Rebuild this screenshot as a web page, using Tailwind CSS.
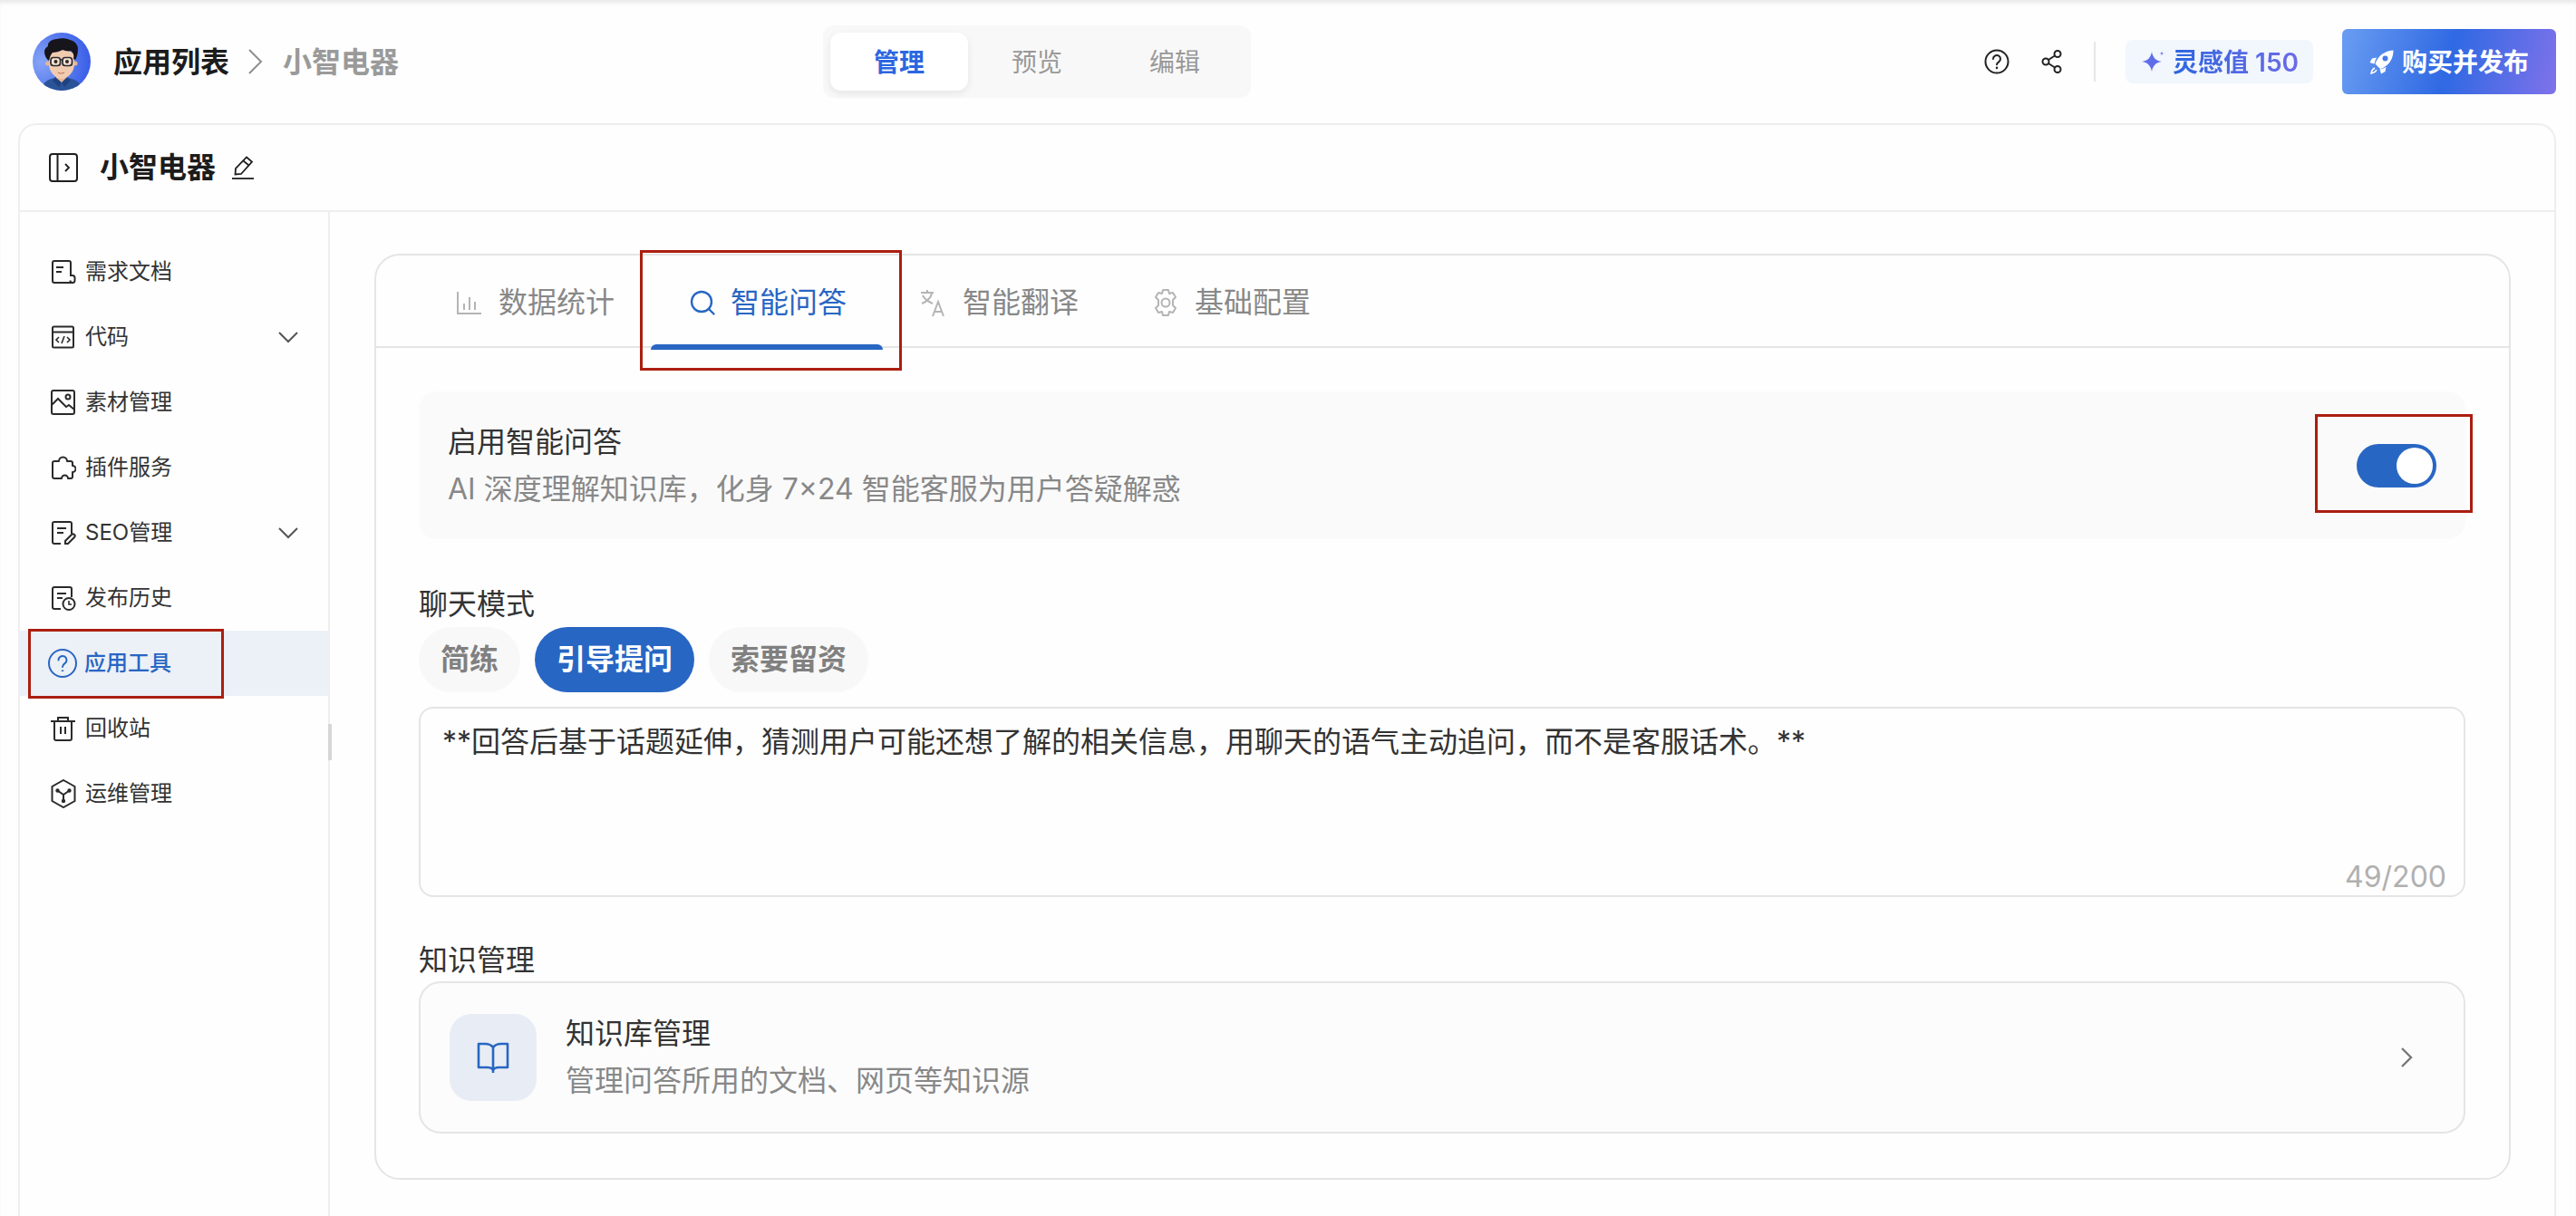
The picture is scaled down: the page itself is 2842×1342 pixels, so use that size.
<!DOCTYPE html>
<html lang="zh-CN">

<head>
    <meta charset="UTF-8">
    <meta name="viewport" content="width=device-width, initial-scale=1.0">
    <title>小智电器</title>
    <script src="https://cdn.jsdelivr.net/npm/@tailwindcss/browser@4"></script>
</head>

<body class="relative w-[2842px] h-[1342px] overflow-hidden bg-[#fefefe] text-[#333333] font-['Inter','Noto_Sans_CJK_SC',sans-serif] shadow-[inset_0_5px_5px_-2px_rgba(0,0,0,0.09)]">

    <!-- Top bar -->
    <header class="flex items-center h-[136px]">
        <div class="flex items-center w-[908px] pl-9">
            <svg class="w-16 h-16 shrink-0" viewBox="0 0 64 64">
                <defs>
                    <radialGradient id="avatarBg" cx="0.15" cy="0.5" r="0.95">
                        <stop offset="0" stop-color="#86a4f6" />
                        <stop offset="1" stop-color="#2f55e6" />
                    </radialGradient>
                    <clipPath id="avatarClip">
                        <circle cx="32" cy="32" r="32" />
                    </clipPath>
                </defs>
                <g clip-path="url(#avatarClip)">
                    <rect width="64" height="64" fill="url(#avatarBg)" />
                    <path d="M10 64c0-9 7-14 22-15 15 1 22 6 22 15z" fill="#2a5398" />
                    <path d="M26 44h11v7l-5 5-6-5z" fill="#e7b497" />
                    <path d="M25 49l7 6-3 5-7-7zM38 49l-6 6 3 5 7-7z" fill="#1e4380" />
                    <circle cx="16.500" cy="34" r="2.500" fill="#e7b497" />
                    <circle cx="47" cy="34" r="2.500" fill="#e7b497" />
                    <path d="M18 26c0-4 6-7 14-7s14 3 14 7v9c0 8-7 16-14 16S18 43 18 35z" fill="#f1cbb0" />
                    <path d="M18 31c-3-2-5-6-5-10 0-3 2-5 4-6-1-4 4-8 10-8 4-1 10-1 14 1 5 1 9 5 9 10 0 4-1 9-3 12l-2-1c1-4 0-7-3-9-3 1-6 0-9-1-3 2-8 3-11 3-2 2-3 5-4 9z" fill="#17151c" />
                    <rect x="20" y="27.500" width="10.500" height="9" rx="3" fill="#f4e2d5" stroke="#2a2a2e" stroke-width="1.700" />
                    <rect x="33" y="27.500" width="10.500" height="9" rx="3" fill="#f4e2d5" stroke="#2a2a2e" stroke-width="1.700" />
                    <path d="M30.500 30h2.500" stroke="#2a2a2e" stroke-width="1.500" />
                    <circle cx="25.500" cy="32" r="2" fill="#33261f" />
                    <circle cx="38" cy="32" r="2" fill="#33261f" />
                    <path d="M28 44c2 1.200 5 1.200 7 0" stroke="#b9705c" stroke-width="1.100" fill="none" />
                </g>
            </svg>
            <span class="ml-[25px] pt-[2px] text-[32px] leading-[44px] font-semibold text-[#1c1c1c]">应用列表</span>
            <svg class="ml-[21px] w-4 h-7 shrink-0" viewBox="0 0 16 28" fill="none" stroke="#8f8f8f" stroke-width="2">
                <path d="M1 1l13 13L1 27" />
            </svg>
            <span class="ml-[22px] pt-[2px] text-[32px] leading-[44px] font-semibold text-[#9a9a9a]">小智电器</span>
        </div>

        <div class="flex w-[472px] h-20 p-2 rounded-xl bg-[#f8f8f8]">
            <div class="flex-1 flex items-center justify-center pt-[2px] rounded-xl bg-white text-[28px] font-semibold text-[#2b66e0] shadow-[0_3px_8px_rgba(0,0,0,0.08)]">管理</div>
            <div class="flex-1 flex items-center justify-center pt-[2px] text-[28px] text-[#999999]">预览</div>
            <div class="flex-1 flex items-center justify-center pt-[2px] text-[28px] text-[#999999]">编辑</div>
        </div>

        <div class="flex-1 flex items-center justify-end pr-[22px]">
            <svg class="w-7 h-7 shrink-0" viewBox="0 0 28 28" fill="none" stroke="#222222" stroke-width="2" stroke-linecap="round">
                <circle cx="14" cy="14" r="12.500" />
                <path d="M10 11a4 4 0 1 1 6.200 3.300c-1.400.9-2.200 1.500-2.200 3" />
                <path d="M14 20.600v.4" stroke-width="2.400" />
            </svg>
            <svg class="ml-[35px] w-6 h-7 shrink-0" viewBox="0 0 24 28" fill="none" stroke="#222222" stroke-width="2">
                <circle cx="18" cy="5.500" r="3.500" />
                <circle cx="5" cy="14" r="3.500" />
                <circle cx="18" cy="22.500" r="3.500" />
                <path d="M8 12l7-4.500M8 16l7 4.500" />
            </svg>
            <div class="ml-[34px] w-[2px] h-11 bg-[#e6e6e6]"></div>
            <div class="ml-[33px] flex items-center w-[207px] h-12 pl-[17px] rounded-lg bg-[#f2f6fd]">
                <svg class="w-[26px] h-7 shrink-0" viewBox="0 0 26 28">
                    <path d="M12 3c1 6 4 10 11 11-7 1-10 5-11 11-1-6-4-10-11-11 7-1 10-5 11-11z" fill="#5f6ee8" />
                    <path d="M23 2.500c.2 1.500.8 2.200 2.500 2.500-1.700.3-2.300 1-2.500 2.500-.2-1.500-.8-2.200-2.500-2.500 1.700-.3 2.300-1 2.500-2.500z" fill="#7d7ff0" />
                </svg>
                <span class="ml-[9px] pt-[2px] text-[28px] leading-[44px] font-semibold whitespace-nowrap bg-linear-to-r from-[#2b66e0] to-[#6a6be6] bg-clip-text text-transparent">灵感值 150</span>
            </div>
            <button class="ml-8 flex items-center w-[236px] h-[72px] pl-[30px] rounded-md bg-linear-[105deg,#6a9df2_0%,#2f69e3_50%,#8072ea_100%] text-white text-[28px] font-semibold">
                <svg class="w-7 h-7 shrink-0" viewBox="0 0 28 28">
                    <path d="M26.500 1.500c-7 .5-13 3.500-17 9-1.500 2-2.500 4-3 6l5.500 5.500c2-.5 4-1.500 6-3 5.500-4 8.500-10 8.500-17.500z" fill="#ffffff" />
                    <path d="M8 9.500l-5 1L.5 15l5 1.500c.5-2.500 1.500-5 2.500-7z" fill="#ffffff" />
                    <path d="M18.500 20l-1 5-4.500 2.500-1.500-5c2.500-.5 5-1.500 7-2.500z" fill="#ffffff" />
                    <circle cx="17.500" cy="10.500" r="3" fill="#4a7be6" />
                    <path d="M6 21c-2 1-3.500 3-4 6 3-.5 5-2 6-4" fill="none" stroke="#ffffff" stroke-width="1.500" />
                </svg>
                <span class="ml-[8px] pt-[2px] whitespace-nowrap">购买并发布</span>
            </button>
        </div>
    </header>

    <!-- App panel -->
    <div class="ml-5 w-[2800px] h-[1206px] rounded-t-[20px] border-2 border-b-0 border-[#eeeeee]">
        <div class="flex items-center h-[96px] pl-8 border-b-2 border-[#eeeeee]">
            <svg class="w-8 h-8 shrink-0" viewBox="0 0 32 32" fill="none" stroke="#1f1f1f" stroke-width="2">
                <rect x="1" y="1" width="30" height="30" rx="3" />
                <path d="M9.500 1v30" />
                <path d="M18 12l4 4-4 4" stroke-width="1.800" />
            </svg>
            <span class="ml-[24px] text-[32px] leading-[44px] font-semibold text-[#1c1c1c]">小智电器</span>
            <svg class="ml-[18px] w-6 h-[26px] shrink-0" viewBox="0 0 24 26" fill="none" stroke="#1f1f1f" stroke-width="1.800">
                <path d="M16 1.500l6 5L10 20l-6.500.5L4 14z" />
                <path d="M12.500 5.500l6 5" />
                <path d="M0 25h24" />
            </svg>
        </div>

        <div class="flex">
            <!-- Sidebar -->
            <nav class="relative w-[342px] h-[1108px] pt-[30px] border-r-2 border-[#eeeeee] text-2xl text-[#333333]">
                <a class="flex items-center h-[72px] pl-[34px] gap-[10px]">
                    <svg class="w-7 h-7 shrink-0" viewBox="0 0 28 28" fill="none" stroke="#2a2a2a" stroke-width="2">
                        <path d="M22 19V4a2 2 0 0 0-2-2H4a2 2 0 0 0-2 2v20a2 2 0 0 0 2 2h21" />
                        <path d="M22 18h2a2.500 2.500 0 0 1 2.500 2.500v3a2.500 2.500 0 0 1-5 0" />
                        <path d="M6 9h8M6 14h6" />
                    </svg>
                    <span>需求文档</span>
                </a>
                <a class="flex items-center h-[72px] pl-[34px] gap-[10px]">
                    <svg class="w-7 h-7 shrink-0" viewBox="0 0 28 28" fill="none" stroke="#2a2a2a" stroke-width="2">
                        <rect x="2" y="2.500" width="23" height="23" rx="1.500" />
                        <path d="M2 8.500h23" />
                        <path d="M9 14l-3 3 3 3M18 14l3 3-3 3M15 13l-3 8" stroke-width="1.600" />
                    </svg>
                    <span>代码</span>
                    <svg class="ml-auto mr-8 w-6 h-6 shrink-0" viewBox="0 0 24 24" fill="none" stroke="#555555" stroke-width="2">
                        <path d="M2 7l10 10L22 7" />
                    </svg>
                </a>
                <a class="flex items-center h-[72px] pl-[34px] gap-[10px]">
                    <svg class="w-7 h-7 shrink-0" viewBox="0 0 28 28" fill="none" stroke="#2a2a2a" stroke-width="2">
                        <rect x="1" y="1" width="25" height="26" rx="2" />
                        <circle cx="19" cy="8" r="2.500" />
                        <path d="M1 17l7-7 9 9 3-2 6 5" />
                    </svg>
                    <span>素材管理</span>
                </a>
                <a class="flex items-center h-[72px] pl-[34px] gap-[10px]">
                    <svg class="w-7 h-7 shrink-0" viewBox="0 0 28 28" fill="none" stroke="#2a2a2a" stroke-width="2" stroke-linejoin="round">
                        <path d="M7 26H4a2 2 0 0 1-2-2V9a2 2 0 0 1 2-2h5a4.500 4.500 0 0 1 9 0h4a2 2 0 0 1 2 2v3a3.500 3.500 0 0 1 0 7v5a2 2 0 0 1-2 2h-3a3.500 3.500 0 0 0-7 0z" />
                    </svg>
                    <span>插件服务</span>
                </a>
                <a class="flex items-center h-[72px] pl-[34px] gap-[10px]">
                    <svg class="w-7 h-7 shrink-0" viewBox="0 0 28 28" fill="none" stroke="#2a2a2a" stroke-width="2">
                        <path d="M11 26H4a2 2 0 0 1-2-2V4a2 2 0 0 1 2-2h17a2 2 0 0 1 2 2v11" />
                        <path d="M7 9h10M7 14h7" />
                        <path d="M16 26v-3l7-7a2 2 0 0 1 3 3l-7 7z" />
                    </svg>
                    <span>SEO管理</span>
                    <svg class="ml-auto mr-8 w-6 h-6 shrink-0" viewBox="0 0 24 24" fill="none" stroke="#555555" stroke-width="2">
                        <path d="M2 7l10 10L22 7" />
                    </svg>
                </a>
                <a class="flex items-center h-[72px] pl-[34px] gap-[10px]">
                    <svg class="w-7 h-7 shrink-0" viewBox="0 0 28 28" fill="none" stroke="#2a2a2a" stroke-width="2">
                        <path d="M11 26H4a2 2 0 0 1-2-2V4a2 2 0 0 1 2-2h17a2 2 0 0 1 2 2v9" />
                        <path d="M7 9h10M7 14h6" />
                        <circle cx="20" cy="20.500" r="6.500" />
                        <path d="M20 17v4h3" stroke-width="1.600" />
                    </svg>
                    <span>发布历史</span>
                </a>
                <a class="flex items-center h-[72px] pl-[31px] gap-2 bg-[#ecf0f7] font-medium text-[#2866c3]">
                    <svg class="w-8 h-8 shrink-0" viewBox="0 0 32 32" fill="none" stroke="#2866c3" stroke-width="2">
                        <circle cx="16" cy="16" r="15" />
                        <path d="M11.500 12.500a4.500 4.500 0 1 1 7 3.700c-1.500 1-2.500 1.800-2.500 3.800" stroke-linecap="round" />
                        <path d="M16 23.500v1.500" stroke-width="2.400" />
                    </svg>
                    <span>应用工具</span>
                </a>
                <a class="flex items-center h-[72px] pl-[34px] gap-[10px]">
                    <svg class="w-7 h-7 shrink-0" viewBox="0 0 28 28" fill="none" stroke="#2a2a2a" stroke-width="2">
                        <path d="M0 6h27" />
                        <path d="M8 6V2h11v4" />
                        <path d="M4 6v19a2 2 0 0 0 2 2h15a2 2 0 0 0 2-2V6" />
                        <path d="M11 12v8M16 12v8" />
                    </svg>
                    <span>回收站</span>
                </a>
                <a class="flex items-center h-[72px] pl-[34px] gap-[10px]">
                    <svg class="w-7 h-8 shrink-0" viewBox="0 0 28 32" fill="none" stroke="#2a2a2a" stroke-width="2">
                        <path d="M14 1l12.500 7v16L14 31 1.500 24V8z" />
                        <path d="M7.500 12.500L14 17l6.500-4.500M14 17v7" />
                        <circle cx="7.500" cy="12.500" r="1.200" fill="#2a2a2a" />
                        <circle cx="20.500" cy="12.500" r="1.200" fill="#2a2a2a" />
                        <circle cx="14" cy="24" r="1.200" fill="#2a2a2a" />
                    </svg>
                    <span>运维管理</span>
                </a>
                <div class="absolute right-[-4px] top-[565px] w-1 h-10 bg-[#d6d6d6]"></div>
            </nav>

            <!-- Content -->
            <main class="flex-1 pl-[49px] pr-12 pt-[46px]">
                <div class="h-[1022px] rounded-[28px] border-2 border-[#e5e5e5]">
                    <div class="flex h-[102px] pl-[47px] border-b-2 border-[#e5e5e5] text-[32px] text-[#888888]">
                        <div class="relative flex items-center w-64 pl-[42px] gap-[18px] pt-[3px]">
                            <svg class="w-7 h-7 shrink-0" viewBox="0 0 28 28" fill="none" stroke="#b4b4b4" stroke-width="2">
                                <path d="M1 2v24h26" />
                                <path d="M8 15v7M14 8v14M20 13v9" />
                            </svg>
                            <span>数据统计</span>
                        </div>
                        <div class="relative flex items-center w-64 pl-[43px] gap-[17px] pt-[3px] text-[#2866c3]">
                            <svg class="w-7 h-7 shrink-0" viewBox="0 0 28 28" fill="none" stroke="#2866c3" stroke-width="2.400">
                                <circle cx="13" cy="13" r="11" />
                                <path d="M21 21l5.500 5.500" stroke-linecap="round" />
                            </svg>
                            <span>智能问答</span>
                            <div class="absolute left-0 right-0 bottom-[-4px] h-[6px] rounded-t-[6px] bg-[#2866c3]"></div>
                        </div>
                        <div class="relative flex items-center w-64 pl-[41px] gap-[19px] pt-[3px]">
                            <svg class="w-7 h-8 shrink-0" viewBox="0 0 28 32" fill="none" stroke="#b4b4b4" stroke-width="2">
                                <path d="M1 5h14M8 2v3M3 8c2 4 6 7 11 9M13 6c-1 4-5 9-11 11" />
                                <path d="M14 31l6-16 6 16M16 26h8" />
                            </svg>
                            <span>智能翻译</span>
                        </div>
                        <div class="relative flex items-center w-64 pl-[42px] gap-[18px] pt-[3px]">
                            <svg class="w-7 h-8 shrink-0" viewBox="0 0 28 32" fill="none" stroke="#b4b4b4" stroke-width="2" stroke-linejoin="round">
                                <path d="M11 2h6l1 4 4-1 3 5-3 3v6l3 3-3 5-4-1-1 4h-6l-1-4-4 1-3-5 3-3v-6l-3-3 3-5 4 1z" />
                                <circle cx="14" cy="16" r="4.500" />
                            </svg>
                            <span>基础配置</span>
                        </div>
                    </div>

                    <div class="pl-[47px] pr-12 pt-12">
                        <div class="flex items-center justify-between h-[163px] pl-8 pr-8 rounded-[20px] bg-[#fafafa]">
                            <div class="flex flex-col gap-2 text-[32px] leading-[44px]">
                                <span class="text-[#333333]">启用智能问答</span>
                                <span class="text-[#888888]">AI 深度理解知识库，化身 7×24 智能客服为用户答疑解惑</span>
                            </div>
                            <div class="flex items-center justify-end w-[88px] h-12 p-1 rounded-full bg-[#2866c3]">
                                <div class="w-10 h-10 rounded-full bg-white"></div>
                            </div>
                        </div>

                        <div class="mt-[50px] text-[32px] leading-[44px] text-[#333333]">聊天模式</div>
                        <div class="mt-[3px] flex gap-4 text-[32px]">
                            <button class="h-[72px] px-6 rounded-full bg-[#f8f8f8] font-semibold text-[#808080]">简练</button>
                            <button class="h-[72px] px-6 rounded-full bg-[#2866c3] font-semibold text-white">引导提问</button>
                            <button class="h-[72px] px-6 rounded-full bg-[#f8f8f8] font-semibold text-[#808080]">索要留资</button>
                        </div>

                        <div class="mt-4 flex flex-col h-[210px] pl-6 pr-[19px] pt-[15px] rounded-2xl border-2 border-[#e5e5e5] text-[32px] leading-[44px]">
                            <p class="text-[#333333]">**回答后基于话题延伸，猜测用户可能还想了解的相关信息，用聊天的语气主动追问，而不是客服话术。**</p>
                            <span class="mt-auto self-end leading-[40px] text-[#b0b0b0]">49/200</span>
                        </div>

                        <div class="mt-[48px] text-[32px] leading-[44px] text-[#333333]">知识管理</div>
                        <div class="mt-[1px] flex items-center h-[168px] pl-8 pr-[56px] rounded-3xl border-2 border-[#e5e5e5] bg-[#fcfcfc]">
                            <div class="flex items-center justify-center w-24 h-24 rounded-3xl bg-[#e8edf5]">
                                <svg class="w-9 h-9" viewBox="0 0 36 36" fill="none" stroke="#2866c3" stroke-width="2.600" stroke-linejoin="round">
                                    <path d="M18 7c-2-3-5-4-9-4H2v26h10c3 0 5 1 6 3 1-2 3-3 6-3h10V3h-7c-4 0-7 1-9 4zM18 7v28" />
                                </svg>
                            </div>
                            <div class="ml-8 flex flex-col gap-2 text-[32px] leading-[44px]">
                                <span class="text-[#333333]">知识库管理</span>
                                <span class="text-[#888888]">管理问答所用的文档、网页等知识源</span>
                            </div>
                            <svg class="ml-auto w-[14px] h-6 shrink-0" viewBox="0 0 14 24" fill="none" stroke="#777777" stroke-width="2.400">
                                <path d="M2 2l10 10L2 22" />
                            </svg>
                        </div>
                    </div>
                </div>
            </main>
        </div>
    </div>

    <!-- Red annotation boxes drawn over the screenshot -->
    <div class="absolute left-[31px] top-[694px] w-[216px] h-[77px] border-[3px] border-[#ab1e10]"></div>
    <div class="absolute left-[706px] top-[276px] w-[289px] h-[133px] border-[3px] border-[#ab1e10]"></div>
    <div class="absolute left-[2554px] top-[457px] w-[174px] h-[109px] border-[3px] border-[#ab1e10]"></div>
</body>

</html>
